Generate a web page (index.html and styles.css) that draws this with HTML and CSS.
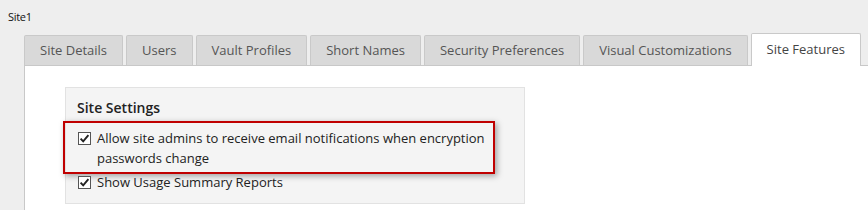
FILE: index.html
```html
<!DOCTYPE html>
<html>
<head>
<meta charset="utf-8">
<link rel="stylesheet" href="styles.css">
</head>
<body>
<div class="page">
  <div class="site-title">Site1</div>
  <div class="tabs">
    <div class="tab">Site Details</div>
    <div class="tab">Users</div>
    <div class="tab">Vault Profiles</div>
    <div class="tab">Short Names</div>
    <div class="tab">Security Preferences</div>
    <div class="tab">Visual Customizations</div>
    <div class="tab active">Site Features</div>
  </div>
  <div class="panel">
    <div class="settings">
      <div class="settings-title">Site Settings</div>
      <div class="option highlight">
        <span class="cb"><svg width="13" height="13" viewBox="0 0 13 13"><rect x="0.5" y="0.5" width="12" height="12" fill="#fff" stroke="#555"/><path d="M2.6 6.6 L5.2 9.4 L10.4 3.2" fill="none" stroke="#222" stroke-width="1.9"/></svg></span>
        <span class="label">Allow site admins to receive email notifications when encryption passwords change</span>
      </div>
      <div class="option">
        <span class="cb"><svg width="13" height="13" viewBox="0 0 13 13"><rect x="0.5" y="0.5" width="12" height="12" fill="#fff" stroke="#555"/><path d="M2.6 6.6 L5.2 9.4 L10.4 3.2" fill="none" stroke="#222" stroke-width="1.9"/></svg></span>
        <span class="label">Show Usage Summary Reports</span>
      </div>
    </div>
  </div>
</div>
</body>
</html>
```
FILE: styles.css
```css
html, body {
  margin: 0;
  padding: 0;
  background: #eeeeee;
  font-family: "Open Sans", "Liberation Sans", sans-serif;
  color: #222;
}
.page {
  width: 868px;
  height: 210px;
  overflow: hidden;
}
.site-title {
  font-size: 11px;
  letter-spacing: -0.3px;
  padding: 10px 0 0 8px;
  height: 23px;
  line-height: 14px;
  box-sizing: border-box;
  color: #111;
}
.tabs {
  display: flex;
  align-items: flex-end;
  gap: 3px;
  margin-left: 24px;
  height: 32px;
  border-bottom: 1px solid #c8c8c8;
  margin-top: 10px;
}
.tab {
  flex: none;
  white-space: nowrap;
  height: 29px;
  line-height: 29px;
  padding: 0 15px;
  font-size: 13px;
  color: #555;
  background: #d9d9d9;
  border: 1px solid #c9c9c9;
  border-bottom: none;
  border-radius: 2px 2px 0 0;
}
.tab.active {
  background: #fff;
  margin-bottom: -1px;
  height: 32px;
  line-height: 31px;
  color: #444;
}
.panel {
  margin-left: 24px;
  background: #fff;
  border-left: 1px solid #c8c8c8;
  height: 200px;
  padding: 21px 0 0 40px;
  box-sizing: border-box;
}
.settings {
  width: 460px;
  height: 117px;
  box-sizing: border-box;
  background: #f4f4f4;
  border: 1px solid #e2e2e2;
  padding: 10px 0 0 11px;
}
.settings-title {
  font-size: 14px;
  font-weight: 600;
  color: #222;
  line-height: 20px;
  margin-bottom: 3px;
}
.option {
  display: flex;
  align-items: flex-start;
  font-size: 13px;
  line-height: 20px;
  color: #222;
}
.cb {
  flex: none;
  width: 13px;
  height: 13px;
  margin: 4px 6px 0 1px;
  display: block;
}
.cb svg { display: block; }
.highlight {
  margin-left: -14px;
  width: 432px;
  height: 53px;
  box-sizing: border-box;
  border: 2px solid #c00000;
  padding: 5px 0 0 12px;
  box-shadow: 2px 2px 6px rgba(0,0,0,0.35);
  margin-bottom: -2px;
}
```
